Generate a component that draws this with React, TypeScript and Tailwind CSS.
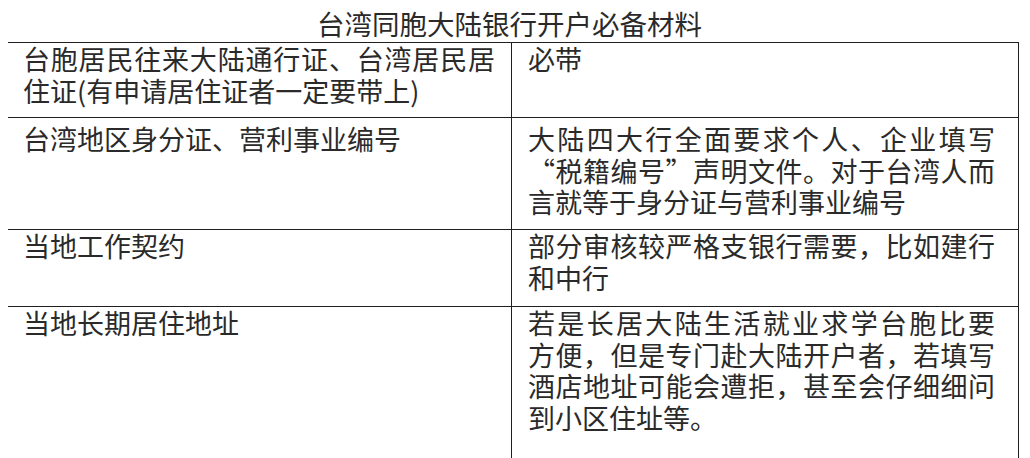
import React from "react";

type Cell = { lines: string[]; pt: string };

const rows: { h: string; left: Cell; right: Cell }[] = [
  {
    h: "h-[75px]",
    left: { lines: ["台胞居民往来大陆通行证、台湾居民居", "住证(有申请居住证者一定要带上)"], pt: "pt-[0px]" },
    right: { lines: ["必带"], pt: "pt-[0px]" },
  },
  {
    h: "h-[112px]",
    left: { lines: ["台湾地区身分证、营利事业编号"], pt: "pt-[5px]" },
    right: {
      lines: ["大陆四大行全面要求个人、企业填写", "“税籍编号”声明文件。对于台湾人而", "言就等于身分证与营利事业编号"],
      pt: "pt-[5px]",
    },
  },
  {
    h: "h-[77px]",
    left: { lines: ["当地工作契约"], pt: "pt-[0px]" },
    right: { lines: ["部分审核较严格支银行需要，比如建行", "和中行"], pt: "pt-[0px]" },
  },
  {
    h: "h-[160px]",
    left: { lines: ["当地长期居住地址"], pt: "pt-[0px]" },
    right: {
      lines: [
        "若是长居大陆生活就业求学台胞比要",
        "方便，但是专门赴大陆开户者，若填写",
        "酒店地址可能会遭拒，甚至会仔细细问",
        "到小区住址等。",
      ],
      pt: "pt-[0px]",
    },
  },
];

function Lines({ lines, width }: { lines: string[]; width: string }) {
  return (
    <>
      {lines.map((l, i) => (
        <div
          key={i}
          className={
            width +
            " h-[31.5px] pt-[2.25px] leading-[27px] " +
            (i < lines.length - 1 ? "text-justify [text-align-last:justify]" : "text-left")
          }
        >
          {l}
        </div>
      ))}
    </>
  );
}

export default function App() {
  return (
    <div className="w-[1030px] h-[458px] overflow-hidden bg-white text-[#2a2a2a] font-['Noto_Sans_CJK_SC','Noto_Sans_CJK_JP',sans-serif] text-[27px]">
      <div className="pt-[9px] h-[42px] pl-[317px] leading-[28px] text-[27.5px] whitespace-nowrap">台湾同胞大陆银行开户必备材料</div>
      <div className="ml-[8px] w-[1011px] border-t border-r border-[#1f1f1f]">
        {rows.map((r, i) => (
          <div
            key={i}
            className={
              "grid grid-cols-[504px_506px] " +
              r.h +
              (i < rows.length - 1 ? " border-b border-[#1f1f1f]" : "")
            }
          >
            <div className={"border-r border-[#1f1f1f] pl-[15px] " + r.left.pt}>
              <Lines lines={r.left.lines} width="w-[472px]" />
            </div>
            <div className={"pl-[16px] " + r.right.pt}>
              <Lines lines={r.right.lines} width="w-[467px]" />
            </div>
          </div>
        ))}
      </div>
    </div>
  );
}
